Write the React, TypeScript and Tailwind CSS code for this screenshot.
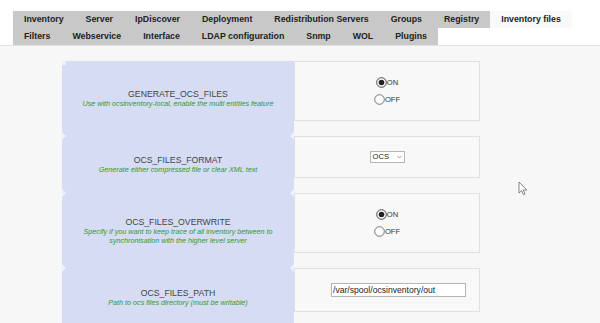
const row1 = ['Inventory', 'Server', 'IpDiscover', 'Deployment', 'Redistribution Servers', 'Groups', 'Registry']
const row2 = ['Filters', 'Webservice', 'Interface', 'LDAP configuration', 'Snmp', 'WOL', 'Plugins']

const font = { fontFamily: '"Liberation Sans", Arial, sans-serif' }

function Tab({ label, active }: { label: string; active?: boolean }) {
  return (
    <div
      className={`h-[17px] px-[11px] flex items-center text-[8.8px] font-bold text-[#222] ${active ? 'bg-[#f9f9f9]' : 'bg-[#c8c8c8]'}`}
    >
      {label}
    </div>
  )
}

function Radio({ checked, label }: { checked?: boolean; label: string }) {
  return (
    <div className="flex items-center justify-center h-[17px] text-[7.6px] text-[#333]">
      <svg width="11" height="11" viewBox="0 0 11 11">
        <circle cx="5.5" cy="5.5" r="4.8" fill="#fff" stroke={checked ? '#333' : '#666'} strokeWidth="0.9" />
        {checked && <circle cx="5.5" cy="5.5" r="2.8" fill="#222" />}
      </svg>
      <span>{label}</span>
    </div>
  )
}

function Notch({ side }: { side: 'left' | 'right' }) {
  return (
    <svg width="5" height="8" viewBox="0 0 5 8" className={`absolute -top-[4px] ${side === 'left' ? 'left-0' : 'right-0'}`}>
      {side === 'left'
        ? <polygon points="0,0 4,4 0,8" fill="#eef0fa" />
        : <polygon points="5,0 1,4 5,8" fill="#eef0fa" />}
    </svg>
  )
}

const rows = [
  { title: 'GENERATE_OCS_FILES', desc: ['Use with ocsinventory-local, enable the multi entities feature'], h: 'h-[60px]', kind: 'radio' },
  { title: 'OCS_FILES_FORMAT', desc: ['Generate either compressed file or clear XML text'], h: 'h-[42px]', kind: 'select' },
  { title: 'OCS_FILES_OVERWRITE', desc: ['Specify if you want to keep trace of all inventory between to', 'synchronisation with the higher level server'], h: 'h-[60px]', kind: 'radio' },
  { title: 'OCS_FILES_PATH', desc: ['Path to ocs files directory (must be writable)'], h: 'h-[44px]', kind: 'input' },
]

export default function App() {
  return (
    <div className="w-[600px] h-[323px] overflow-hidden bg-[#f7f7f7] relative" style={font}>
      {/* Tabs */}
      <div className="bg-white pt-[11px] border-b border-[#e2e2e2]">
        <div className="flex pl-[13px]">
          {row1.map(t => <Tab key={t} label={t} />)}
          <Tab label="Inventory files" active />
        </div>
        <div className="flex pl-[13px]">
          {row2.map(t => <Tab key={t} label={t} />)}
        </div>
      </div>

      {/* Config table */}
      <div className="pt-[15px] pl-[62px] grid grid-cols-[232px_186px]">
        {rows.map((r, i) => (
          <div key={r.title} className="contents">
            <div className="bg-[#d6dcf3] relative flex flex-col items-center justify-center text-center">
              {i > 0 && <Notch side="left" />}
              {i > 0 && <Notch side="right" />}
              {i === 0 && <div className="absolute top-0 left-0 w-[4px] h-[4px] bg-[#eef0fa]" />}
              <div className="text-[8.7px] text-[#444] leading-[10px]">{r.title}</div>
              {r.desc.map(d => (
                <div key={d} className="text-[7.2px] italic text-[#2f9a2f] leading-[9px]">{d}</div>
              ))}
            </div>
            <div className="pb-[15px]">
              <div className={`${r.h} border border-[#e0e0e0] bg-[#f8f8f8] flex flex-col items-center justify-center`}>
                {r.kind === 'radio' && (
                  <>
                    <Radio checked label="ON" />
                    <Radio label="OFF" />
                  </>
                )}
                {r.kind === 'select' && (
                  <div className="w-[35px] h-[12px] border border-[#b5b5b5] bg-white flex items-center justify-between px-[2px] text-[7.6px] text-[#222]">
                    <span>OCS</span>
                    <svg width="5" height="4" viewBox="0 0 5 4"><polyline points="0.5,1 2.5,3 4.5,1" fill="none" stroke="#777" strokeWidth="0.7" /></svg>
                  </div>
                )}
                {r.kind === 'input' && (
                  <div className="w-[135px] h-[14px] border border-[#b5b5b5] bg-white flex items-center px-[1px] text-[8.6px] text-[#222] ml-[23px]">
                    /var/spool/ocsinventory/out
                  </div>
                )}
              </div>
            </div>
          </div>
        ))}
      </div>

      {/* mouse cursor */}
      <svg width="10" height="15" viewBox="0 0 10 15" className="absolute left-[518px] top-[181px]">
        <path d="M1 1 L1 12 L3.6 9.6 L5.4 13.6 L7 12.9 L5.3 9 L8.8 9 Z" fill="#fff" stroke="#666" strokeWidth="0.8" strokeLinejoin="round" />
      </svg>
    </div>
  )
}
